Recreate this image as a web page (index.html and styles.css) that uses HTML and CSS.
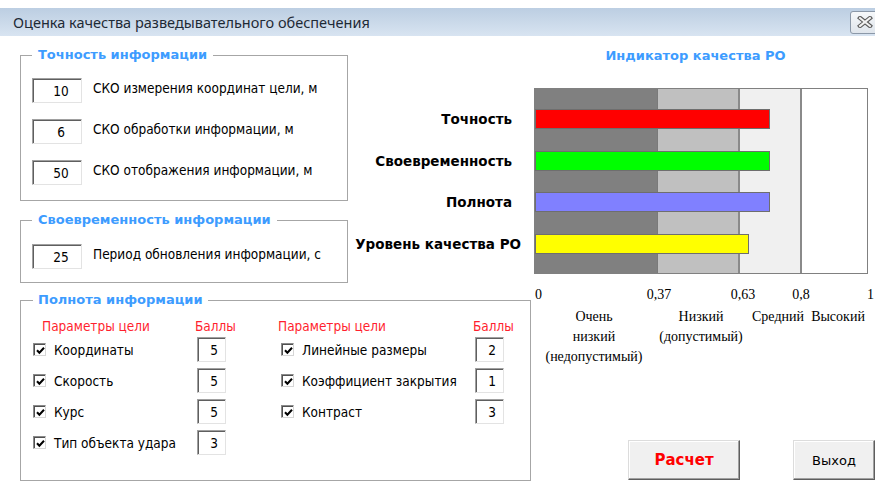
FILE: index.html
```html
<!DOCTYPE html>
<html lang="ru">
<head>
<meta charset="utf-8">
<title>Оценка качества разведывательного обеспечения</title>
<link rel="stylesheet" href="styles.css">
</head>
<body>
<div class="window">
  <header class="titlebar">
    <span class="title">Оценка качества разведывательного обеспечения</span>
    <button class="close" type="button" aria-label="Закрыть">
      <svg width="16" height="12" viewBox="0 0 16 12">
        <path d="M3 2 L13 10 M13 2 L3 10" stroke="#5a5a5a" stroke-width="4.2" stroke-linecap="square"/>
        <path d="M3 2 L13 10 M13 2 L3 10" stroke="#f2f2f2" stroke-width="2" stroke-linecap="square"/>
      </svg>
    </button>
  </header>

  <main class="form">
    <div class="row-top">
      <div class="col-left">
        <fieldset class="group group-accuracy">
          <legend>Точность информации</legend>
          <div class="field"><span class="num">10</span><span class="field-label">СКО измерения координат цели, м</span></div>
          <div class="field"><span class="num">6</span><span class="field-label">СКО обработки информации, м</span></div>
          <div class="field"><span class="num">50</span><span class="field-label">СКО отображения информации, м</span></div>
        </fieldset>

        <fieldset class="group group-time">
          <legend>Своевременность информации</legend>
          <div class="field"><span class="num">25</span><span class="field-label">Период обновления информации, с</span></div>
        </fieldset>
      </div>

      <section class="chart">
        <h2 class="chart-title">Индикатор качества РО</h2>
        <div class="chart-body">
          <div class="chart-labels">
            <span class="chart-label">Точность</span>
            <span class="chart-label">Своевременность</span>
            <span class="chart-label">Полнота</span>
            <span class="chart-label chart-label-total">Уровень качества РО</span>
          </div>
          <div class="plot">
            <div class="bar bar-accuracy" style="width:70.8%"></div>
            <div class="bar bar-time" style="width:70.8%"></div>
            <div class="bar bar-completeness" style="width:70.8%"></div>
            <div class="bar bar-total" style="width:64.5%"></div>
          </div>
        </div>
      </section>
    </div>

    <div class="row-bottom">
      <fieldset class="group group-completeness">
        <legend>Полнота информации</legend>
        <div class="params">
          <span class="hdr hdr-name">Параметры цели</span>
          <span class="hdr hdr-score">Баллы</span>
          <span></span>
          <span class="hdr hdr-name hdr-name-right">Параметры цели</span>
          <span class="hdr hdr-score">Баллы</span>

          <label class="check"><span class="cb"><svg width="9" height="9" viewBox="0 0 9 9"><path d="M1 4.2 L3.4 6.8 L8 1.8" fill="none" stroke="#000" stroke-width="2"/></svg></span>Координаты</label>
          <span class="score">5</span>
          <span></span>
          <label class="check"><span class="cb"><svg width="9" height="9" viewBox="0 0 9 9"><path d="M1 4.2 L3.4 6.8 L8 1.8" fill="none" stroke="#000" stroke-width="2"/></svg></span>Линейные размеры</label>
          <span class="score">2</span>

          <label class="check"><span class="cb"><svg width="9" height="9" viewBox="0 0 9 9"><path d="M1 4.2 L3.4 6.8 L8 1.8" fill="none" stroke="#000" stroke-width="2"/></svg></span>Скорость</label>
          <span class="score">5</span>
          <span></span>
          <label class="check"><span class="cb"><svg width="9" height="9" viewBox="0 0 9 9"><path d="M1 4.2 L3.4 6.8 L8 1.8" fill="none" stroke="#000" stroke-width="2"/></svg></span>Коэффициент закрытия</label>
          <span class="score">1</span>

          <label class="check"><span class="cb"><svg width="9" height="9" viewBox="0 0 9 9"><path d="M1 4.2 L3.4 6.8 L8 1.8" fill="none" stroke="#000" stroke-width="2"/></svg></span>Курс</label>
          <span class="score">5</span>
          <span></span>
          <label class="check"><span class="cb"><svg width="9" height="9" viewBox="0 0 9 9"><path d="M1 4.2 L3.4 6.8 L8 1.8" fill="none" stroke="#000" stroke-width="2"/></svg></span>Контраст</label>
          <span class="score">3</span>

          <label class="check"><span class="cb"><svg width="9" height="9" viewBox="0 0 9 9"><path d="M1 4.2 L3.4 6.8 L8 1.8" fill="none" stroke="#000" stroke-width="2"/></svg></span>Тип объекта удара</label>
          <span class="score">3</span>
        </div>
      </fieldset>

      <div class="scale-panel">
        <div class="scale-values">
          <span class="tick tick-start">0</span>
          <span class="tick">0,37</span>
          <span class="tick">0,63</span>
          <span class="tick">0,8</span>
          <span class="tick tick-start">1</span>
        </div>
        <div class="scale-names">
          <span class="level level-vlow">Очень<br>низкий<br>(недопустимый)</span>
          <span class="level">Низкий<br>(допустимый)</span>
          <span class="level level-mid">Средний</span>
          <span class="level level-high">Высокий</span>
        </div>
        <div class="buttons">
          <button class="btn btn-calc" type="button">Расчет</button>
          <button class="btn btn-exit" type="button">Выход</button>
        </div>
      </div>
    </div>
  </main>
</div>
</body>
</html>
```

FILE: styles.css
```css
* {
  box-sizing: border-box;
}

html, body {
  margin: 0;
  padding: 0;
}

body {
  width: 875px;
  height: 483px;
  overflow: hidden;
  background: #fff;
  font-family: "DejaVu Sans Condensed", "DejaVu Sans", sans-serif;
  font-stretch: condensed;
  font-size: 13.5px;
  color: #000;
}

.window {
  padding-top: 8px;
}

/* ---------- title bar ---------- */
.titlebar {
  height: 28px;
  display: flex;
  align-items: center;
  justify-content: space-between;
  padding-left: 13px;
  background: linear-gradient(#bccee2, #d8e4f1);
  overflow: hidden;
}

.title {
  font-family: "Noto Sans", sans-serif;
  font-stretch: normal;
  font-size: 14.5px;
  color: #1e2a36;
}

.close {
  width: 30px;
  height: 23px;
  margin-right: -5px;
  padding: 0;
  border: 1px solid #8b98a8;
  border-radius: 3px;
  background: linear-gradient(#f6f8fa, #dfe5ec);
  display: flex;
  align-items: center;
  justify-content: center;
}

/* ---------- layout ---------- */
.form {
  display: flex;
  flex-direction: column;
}

.row-top {
  display: flex;
  height: 248px;
}

.col-left {
  width: 328px;
  margin-left: 20px;
  padding-top: 11px;
  display: flex;
  flex-direction: column;
  gap: 11px;
}

.row-bottom {
  display: flex;
  height: 199px;
}

/* ---------- group boxes ---------- */
.group {
  margin: 0;
  border: 1px solid #a6a6a6;
  min-width: 0;
}

.group legend {
  padding: 0 6px;
  font-family: "DejaVu Sans", sans-serif;
  font-stretch: normal;
  font-weight: bold;
  font-size: 13px;
  line-height: 16px;
  color: #3d9cff;
}

.group-accuracy {
  padding: 15px 11px 15px 11px;
  display: flex;
  flex-direction: column;
  gap: 16px;
}

.group-time {
  padding: 16px 11px 13px 11px;
}

.field {
  display: flex;
  align-items: flex-start;
  gap: 11px;
}

.field-label {
  padding-top: 2px;
  line-height: 16px;
  white-space: nowrap;
}

.num,
.score {
  height: 25px;
  background: #fff;
  border: 1px solid;
  border-color: #a0a0a0 #e3e3e3 #e3e3e3 #a0a0a0;
  box-shadow: inset 1px 1px 0 #5f5f5f;
  line-height: 16px;
  padding-top: 4px;
}

.num {
  width: 50px;
  text-align: center;
  padding-left: 8px;
}

.score {
  width: 29px;
  text-align: right;
  padding-right: 7px;
}

/* ---------- completeness group ---------- */
.group-completeness {
  width: 511px;
  margin-left: 20px;
  margin-top: 8px;
  padding: 7px 12px 0 12px;
  height: 189px;
}

.group-completeness legend {
  padding: 0 5px;
}

.params {
  display: grid;
  grid-template-columns: 164px 29px 55px 194px 29px;
  grid-template-rows: 16px repeat(4, 25px);
  row-gap: 6px;
}

.hdr {
  color: #ff1f2f;
  line-height: 16px;
  padding-top: 3px;
  white-space: nowrap;
}

.hdr-name {
  margin-left: 9px;
}

.hdr-name-right {
  margin-left: -3px;
}

.hdr-score {
  margin-left: -2px;
}

.check {
  display: flex;
  align-items: center;
  gap: 8px;
  white-space: nowrap;
}

.cb {
  width: 13px;
  height: 13px;
  flex: none;
  background: #fff;
  border: 1px solid;
  border-color: #8a8a8a #d6d6d6 #d6d6d6 #8a8a8a;
  box-shadow: inset 1px 1px 0 #505050;
  display: flex;
  align-items: center;
  justify-content: center;
  padding: 1px 0 0 1px;
}

.cb svg {
  display: block;
}

/* ---------- chart ---------- */
.chart {
  flex: 1;
  padding-top: 12px;
  display: flex;
  flex-direction: column;
}

.chart-title {
  margin: 0 18px 24px 186px;
  text-align: center;
  font-family: "DejaVu Sans", sans-serif;
  font-stretch: normal;
  font-size: 13px;
  line-height: 16px;
  font-weight: bold;
  color: #3d9cff;
}

.chart-body {
  display: flex;
}

.chart-labels {
  width: 186px;
  padding-top: 21px;
  display: flex;
  flex-direction: column;
  gap: 21.7px;
}

.chart-label {
  height: 20px;
  line-height: 20px;
  text-align: right;
  padding-right: 22px;
  font-family: "DejaVu Sans", sans-serif;
  font-stretch: normal;
  font-size: 13.5px;
  font-weight: bold;
  white-space: nowrap;
}

.chart-label-total {
  padding-right: 13px;
}

.plot {
  width: 334px;
  height: 186px;
  border: 1px solid #808080;
  padding-top: 20px;
  display: flex;
  flex-direction: column;
  gap: 21.7px;
  background: linear-gradient(to right,
    #808080 0 122px,
    #7a7a7a 122px 123px,
    #c0c0c0 123px 203px,
    #8a8a8a 203px 205px,
    #f0f0f0 205px 265px,
    #8a8a8a 265px 267px,
    #fff 267px);
}

.bar {
  height: 20px;
  flex: none;
  border: 1px solid #6e6e6e;
}

.bar-accuracy { background: #ff0000; }
.bar-time { background: #00ff00; }
.bar-completeness { background: #8080ff; }
.bar-total { background: #ffff00; }

/* ---------- scale legend ---------- */
.scale-panel {
  flex: 1;
  padding-top: 1px;
  padding-left: 4px;
  padding-bottom: 3px;
  display: flex;
  flex-direction: column;
  font-family: "Liberation Serif", serif;
  font-stretch: normal;
  font-size: 14px;
  line-height: 20px;
}

.scale-values {
  display: grid;
  grid-template-columns: 124px 84px 58px 66px 0;
}

.tick {
  width: 0;
  display: flex;
  justify-content: center;
  white-space: nowrap;
}

.tick-start {
  justify-content: flex-start;
}

.scale-names {
  margin-top: 2px;
  display: grid;
  grid-template-columns: 124px 84px 58px 66px;
  align-items: start;
}

.level {
  text-align: center;
  white-space: nowrap;
}

.level-vlow {
  padding-right: 6px;
}

.level-mid {
  margin-left: 6px;
  margin-right: -6px;
}

.level-high {
  margin-left: 4px;
  margin-right: -4px;
}

.buttons {
  margin-top: auto;
  display: flex;
  gap: 53px;
  padding-left: 93px;
}

.btn {
  height: 40px;
  background: #f0f0f0;
  border: 1px solid;
  border-color: #dcdcdc #5e5e5e #5e5e5e #dcdcdc;
  box-shadow: inset -1px -1px 0 #a0a0a0, inset 1px 1px 0 #fff;
  font-family: "DejaVu Sans", sans-serif;
  font-stretch: normal;
  padding: 0;
}

.btn-calc {
  width: 112px;
  color: #ff0000;
  font-weight: bold;
  font-size: 15px;
}

.btn-exit {
  width: 82px;
  font-size: 13px;
  color: #000;
}
```
